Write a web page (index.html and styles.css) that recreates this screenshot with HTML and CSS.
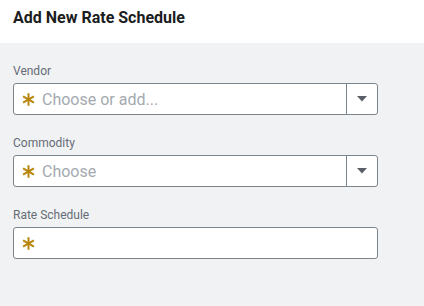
FILE: index.html
```html
<!DOCTYPE html>
<html lang="en">

<head>
    <meta charset="UTF-8">
    <meta name="viewport" content="width=device-width, initial-scale=1.0">
    <title>Add New Rate Schedule</title>
    <link rel="stylesheet" href="styles.css">
</head>

<body>
    <h1 class="nav">Add New Rate Schedule</h1>

    <div class="form">
        <div class="field">
            <label for="vendor">Vendor</label>
            <div class="box">
                <svg class="req" viewBox="0 0 12 12"><path d="M6 0.3V11.7M1 3.1L11 8.9M11 3.1L1 8.9" /></svg>
                <input type="text" id="vendor" placeholder="Choose or add...">
                <span class="drop"><svg viewBox="0 0 10 6"><path d="M0 0H10L5 5.5Z" /></svg></span>
            </div>
        </div>

        <div class="field">
            <label for="commodity">Commodity</label>
            <div class="box">
                <svg class="req" viewBox="0 0 12 12"><path d="M6 0.3V11.7M1 3.1L11 8.9M11 3.1L1 8.9" /></svg>
                <input type="text" id="commodity" placeholder="Choose">
                <span class="drop"><svg viewBox="0 0 10 6"><path d="M0 0H10L5 5.5Z" /></svg></span>
            </div>
        </div>

        <div class="field">
            <label for="rate">Rate Schedule</label>
            <div class="box">
                <svg class="req" viewBox="0 0 12 12"><path d="M6 0.3V11.7M1 3.1L11 8.9M11 3.1L1 8.9" /></svg>
                <input type="text" id="rate">
            </div>
        </div>
    </div>
</body>

</html>
```

FILE: styles.css
```css
* {
    margin: 0;
    padding: 0;
    box-sizing: border-box;
}

body {
    font-family: Roboto, Arial, sans-serif;
    background-color: #f1f2f4;
    height: 100vh;
}

.nav {
    background-color: #ffffff;
    padding: 9px 13px 16px;
    font-size: 16px;
    line-height: 18px;
    font-weight: bold;
    color: #1b1d21;
}

.form {
    padding: 20px 46px 0 13px;
}

.field {
    display: flex;
    flex-direction: column;
    margin-bottom: 20px;
}

.field label {
    font-size: 12px;
    line-height: 16px;
    color: #666d76;
    margin-bottom: 4px;
}

.box {
    display: flex;
    align-items: center;
    height: 32px;
    border: 1px solid #7a858e;
    border-radius: 3px;
    background-color: #ffffff;
}

.req {
    width: 13px;
    height: 13px;
    margin-left: 8px;
    margin-right: 7px;
    flex-shrink: 0;
}

.req path {
    stroke: #b8860b;
    stroke-width: 1.8;
    fill: none;
}

.box input {
    flex: 1;
    min-width: 0;
    border: none;
    outline: none;
    background: transparent;
    font-family: Roboto, Arial, sans-serif;
    font-size: 16px;
    color: #333;
}

.box input::placeholder {
    color: #a4aab0;
}

.drop {
    display: flex;
    align-items: center;
    justify-content: center;
    width: 31px;
    height: 100%;
    border-left: 1px solid #7a858e;
}

.drop svg {
    width: 10px;
    height: 6px;
}

.drop path {
    fill: #5a5e66;
}
```
